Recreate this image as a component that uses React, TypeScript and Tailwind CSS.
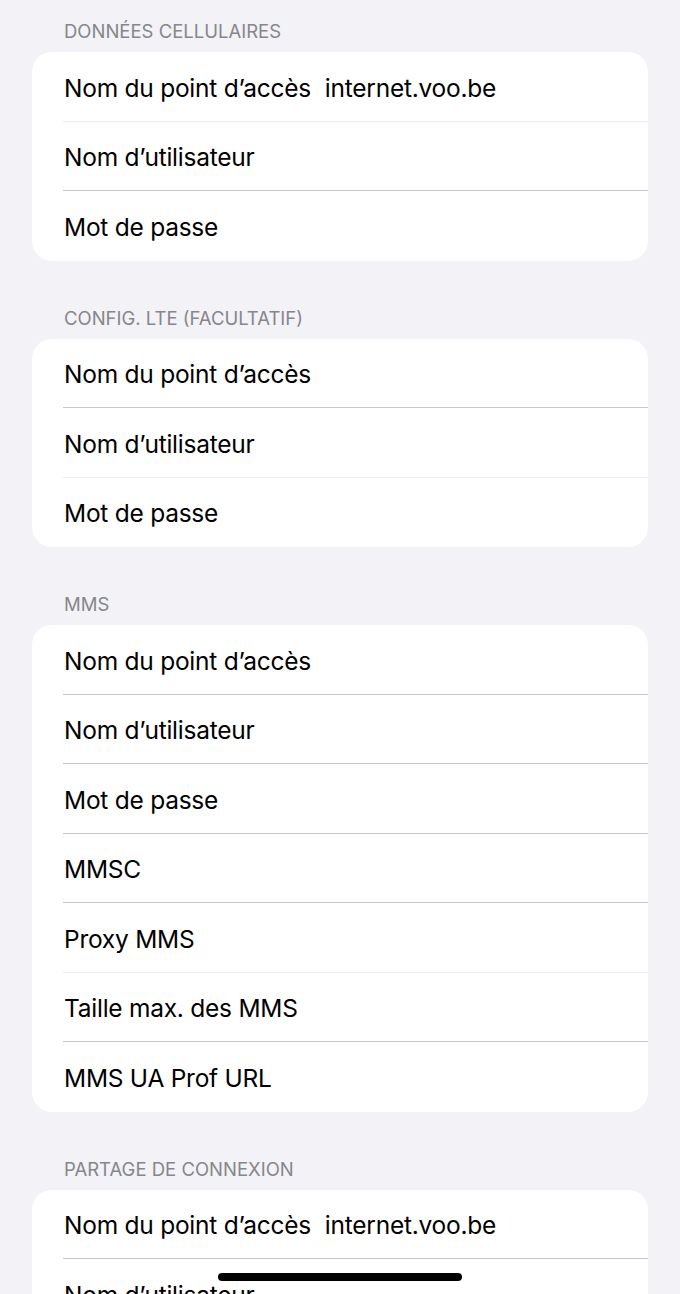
import React from 'react';

type Row = { label: string; value?: string; faint?: boolean };

const sections: { title: string; rows: Row[] }[] = [
  {
    title: 'DONNÉES CELLULAIRES',
    rows: [
      { label: 'Nom du point d’accès', value: 'internet.voo.be', faint: true },
      { label: 'Nom d’utilisateur' },
      { label: 'Mot de passe' },
    ],
  },
  {
    title: 'CONFIG. LTE (FACULTATIF)',
    rows: [
      { label: 'Nom du point d’accès' },
      { label: 'Nom d’utilisateur', faint: true },
      { label: 'Mot de passe' },
    ],
  },
  {
    title: 'MMS',
    rows: [
      { label: 'Nom du point d’accès' },
      { label: 'Nom d’utilisateur' },
      { label: 'Mot de passe' },
      { label: 'MMSC' },
      { label: 'Proxy MMS', faint: true },
      { label: 'Taille max. des MMS' },
      { label: 'MMS UA Prof URL' },
    ],
  },
  {
    title: 'PARTAGE DE CONNEXION',
    rows: [
      { label: 'Nom du point d’accès', value: 'internet.voo.be' },
      { label: 'Nom d’utilisateur' },
      { label: 'Mot de passe' },
    ],
  },
];

const SettingsRow: React.FC<{ row: Row; last: boolean }> = ({ row, last }) => (
  <div className="relative flex h-[69.5px] items-center pl-[32px] pt-[3px]">
    <span className="text-[24.5px] tracking-[-0.25px] text-black">{row.label}</span>
    {row.value && <span className="ml-[14px] text-[24.5px] tracking-[-0.25px] text-black">{row.value}</span>}
    {!last && (
      <div className={`absolute bottom-0 left-[31px] right-0 h-px ${row.faint ? 'bg-[#ededf0]' : 'bg-[#c8c8cc]'}`} />
    )}
  </div>
);

export default function App() {
  return (
    <div
      className="relative h-[1294px] w-[680px] overflow-hidden bg-[#f2f2f7]"
      style={{ fontFamily: 'Inter, "Noto Sans", sans-serif' }}
    >
      <div className="flex flex-col gap-[46px] px-[32px] pt-[20px]">
        {sections.map((s) => (
          <div key={s.title}>
            <div className="mb-[10px] pl-[32px] text-[18.5px] leading-[22px] text-[#86868b]">{s.title}</div>
            <div className="overflow-hidden rounded-[20px] bg-white">
              {s.rows.map((r, i) => (
                <SettingsRow key={i} row={r} last={i === s.rows.length - 1} />
              ))}
            </div>
          </div>
        ))}
      </div>
      <div className="absolute bottom-[13px] left-[218px] h-[8px] w-[244px] rounded-full bg-black" />
    </div>
  );
}
